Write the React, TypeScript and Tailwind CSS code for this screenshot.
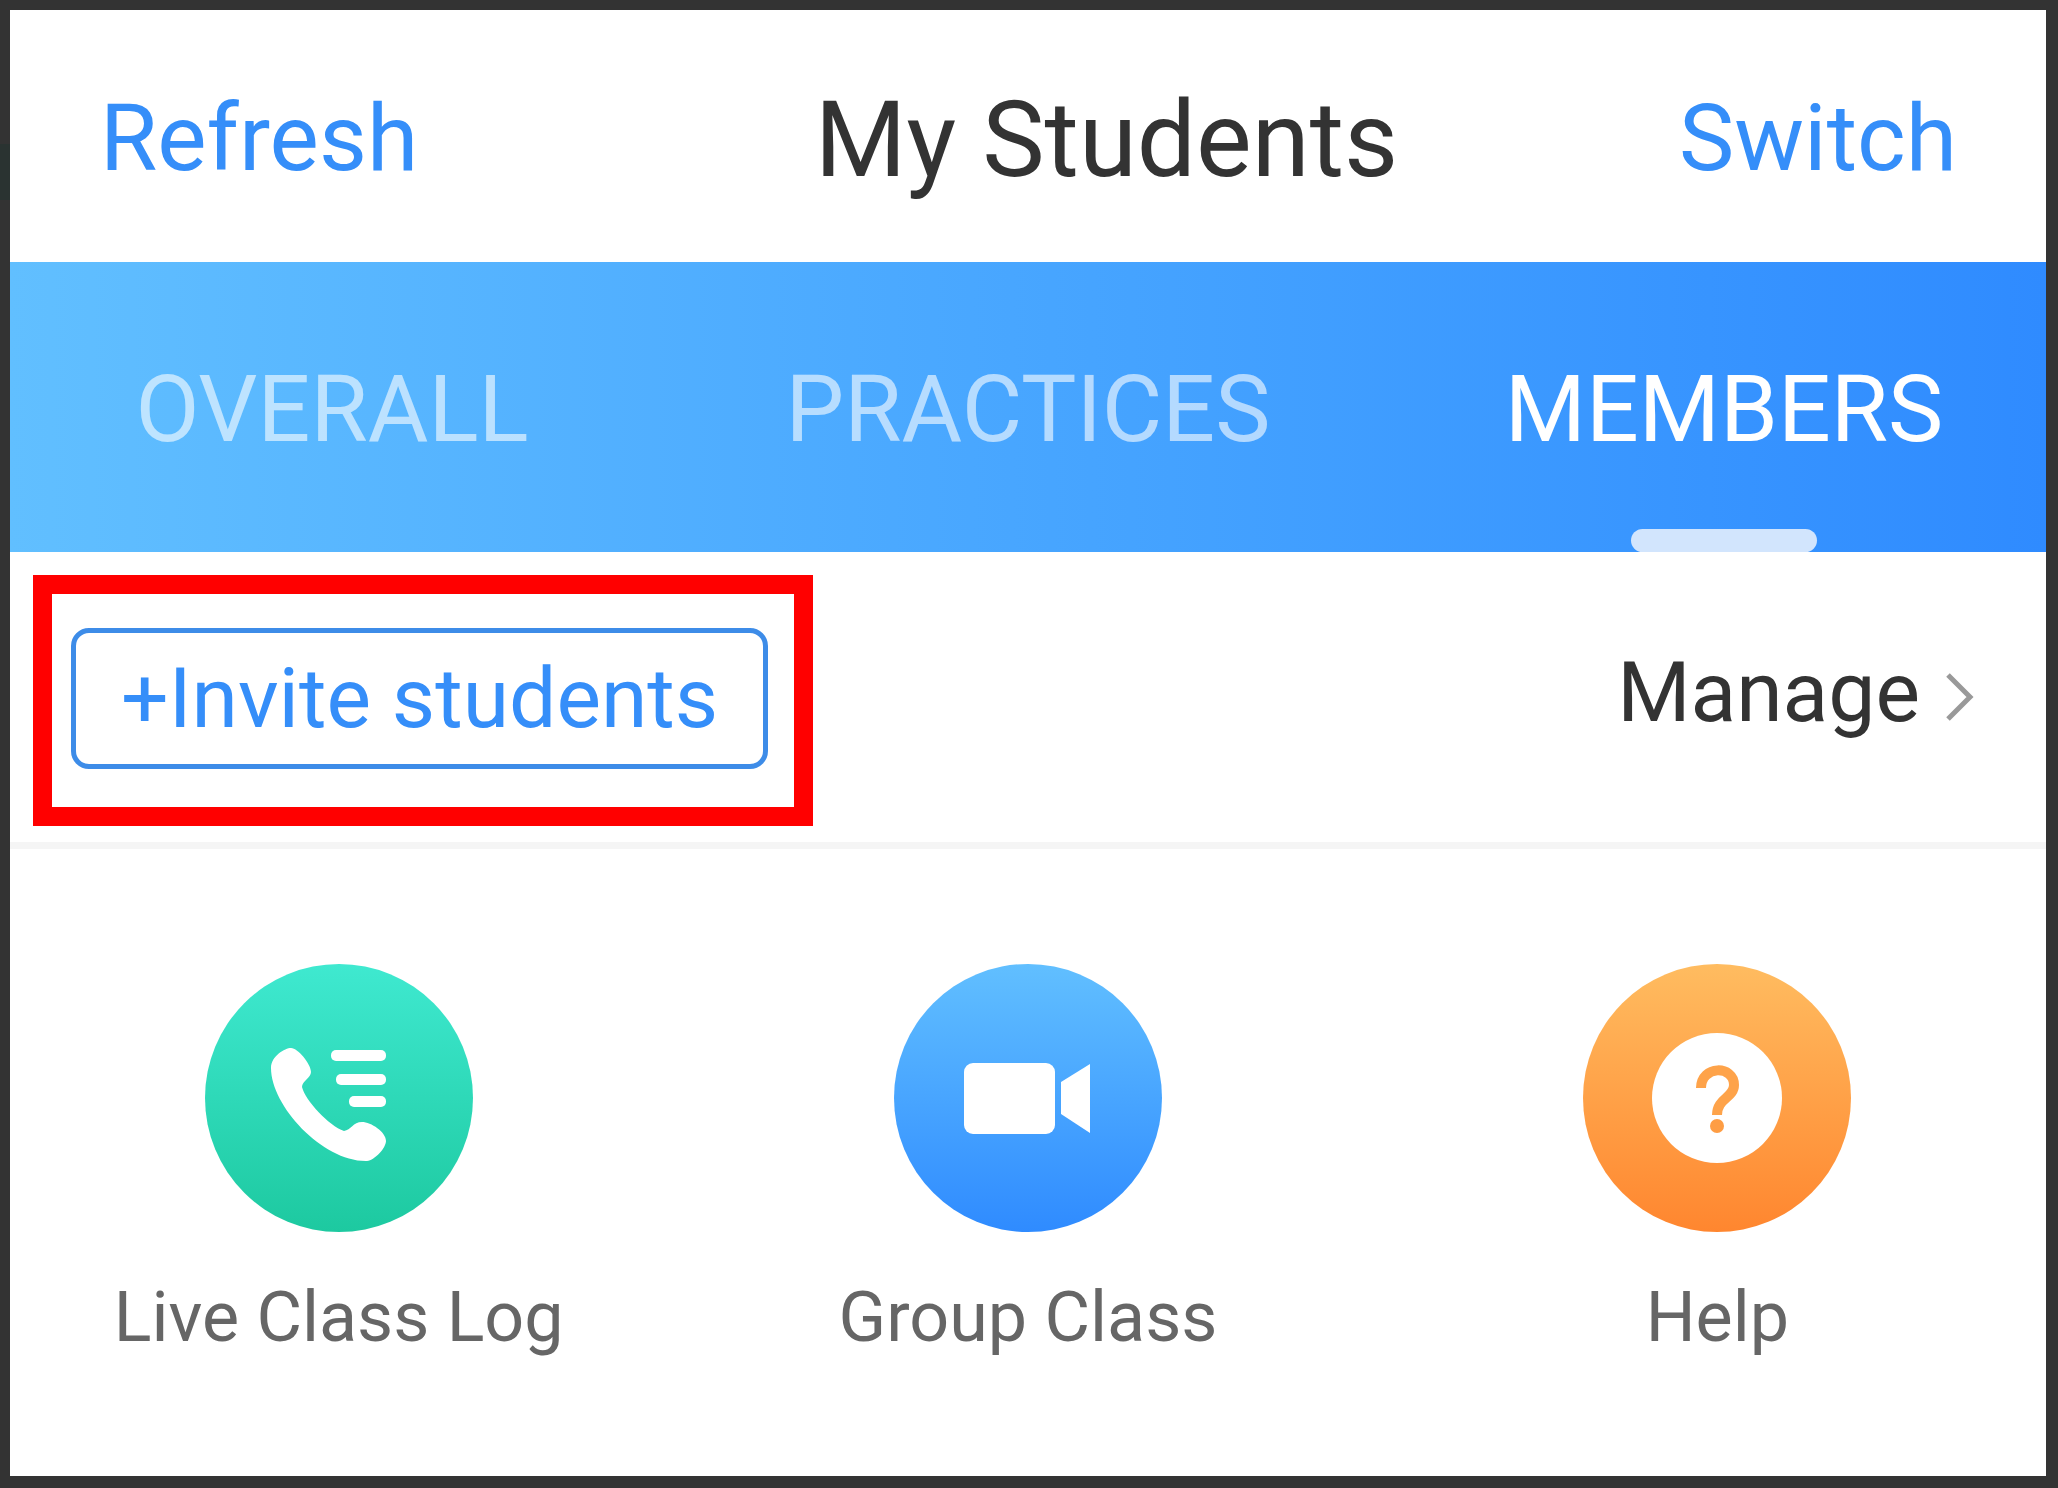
import React from "react";

type Action = { label: string; from: string; to: string; icon: React.ReactNode };

const tabs = ["OVERALL", "PRACTICES", "MEMBERS"];

const actions: Action[] = [
  {
    label: "Live Class Log",
    from: "#3fe9d0",
    to: "#1dc9a0",
    icon: (
      <g fill="#fff">
        <path d="M66 104 C66 92 80 84 86 84 C93 84 106 100 106 108 C106 114 97 117 97 123 C100 136 124 162 139 167 C146 166 148 158 157 158 C166 158 181 168 181 177 C181 184 170 196 162 197 C118 198 66 142 66 104Z" />
        <rect x="126" y="86" width="55" height="11" rx="5" />
        <rect x="131" y="110" width="50" height="11" rx="5" />
        <rect x="144" y="132" width="37" height="11" rx="5" />
      </g>
    ),
  },
  {
    label: "Group Class",
    from: "#61bfff",
    to: "#2f8bff",
    icon: (
      <g fill="#fff">
        <rect x="70" y="99" width="91" height="71" rx="9" />
        <path d="M167 118 L196 100 V169 L167 150Z" />
      </g>
    ),
  },
  {
    label: "Help",
    from: "#ffbc60",
    to: "#ff862f",
    icon: (
      <g>
        <circle cx="134" cy="134" r="65" fill="#fff" />
        <path d="M118 124 C118 101 151 101 151 121 C151 134 134 134 134 151" fill="none" stroke="#fea34a" strokeWidth="10" />
        <circle cx="134" cy="162" r="7" fill="#fe9d44" />
      </g>
    ),
  },
];

export default function App() {
  return (
    <div className="relative flex min-h-screen flex-col border-t-[10px] border-r-[12px] border-b-[12px] border-l-[10px] border-[#333333] bg-white font-[Roboto,sans-serif] text-[#333333]">
      <span className="absolute top-[134px] -left-[10px] h-[56px] w-[10px] bg-[#2a3331]" />

      <header className="flex h-[252px] items-center pt-1 pr-[89px] pl-[90px]">
        <button className="text-[93px] leading-none text-[#358ef9]">Refresh</button>
        <h1 className="flex-1 pt-1 pl-[116px] text-center text-[105px] leading-none">My Students</h1>
        <button className="text-[93px] leading-none text-[#358ef9]">Switch</button>
      </header>

      <nav className="grid h-[290px] grid-cols-3 gap-[52px] bg-linear-to-r from-[#61bfff] to-[#2f8bff]">
        {tabs.map((tab) => {
          const active = tab === "MEMBERS";
          return (
            <button
              key={tab}
              className={
                active
                  ? "relative pt-1 text-[93px] leading-none text-white"
                  : "relative pt-1 text-[93px] leading-none text-white/60"
              }
            >
              {tab}
              {active && (
                <span className="absolute bottom-0 left-1/2 h-[23px] w-[186px] -translate-x-1/2 rounded-[12px] bg-[#d2e5fd]" />
              )}
            </button>
          );
        })}
      </nav>

      <section className="flex items-start justify-between border-b-[7px] border-[#f5f5f5] pt-[23px] pr-[72px] pb-[16px] pl-[23px]">
        <div className="border-[19px] border-[#ff0000] pt-[34px] pr-[26px] pb-[38px] pl-[19px]">
          <button className="h-[141px] rounded-[18px] border-[5px] border-[#3d8ce8] px-[45px] text-[84px] leading-none text-[#358ef9]">
            +Invite students
          </button>
        </div>
        <button className="flex h-[236px] items-center gap-[26px] text-[84px] leading-none">
          Manage
          <svg className="mt-2 h-12 w-7" viewBox="0 0 28 48" fill="none" stroke="#999" strokeWidth="5">
            <path d="M2 2 L24 24 L2 46" />
          </svg>
        </button>
      </section>

      <section className="grid grid-cols-3 gap-8 pt-[115px]">
        {actions.map((a, i) => (
          <button key={a.label} className="flex flex-col items-center gap-[50px] text-[70px] leading-none text-[#666666]">
            <svg className="size-[268px]" viewBox="0 0 268 268">
              <defs>
                <linearGradient id={"disc" + i} x1="0" y1="0" x2="0" y2="1">
                  <stop offset="0" stopColor={a.from} />
                  <stop offset="1" stopColor={a.to} />
                </linearGradient>
              </defs>
              <circle cx="134" cy="134" r="134" fill={"url(#disc" + i + ")"} />
              {a.icon}
            </svg>
            {a.label}
          </button>
        ))}
      </section>
    </div>
  );
}
